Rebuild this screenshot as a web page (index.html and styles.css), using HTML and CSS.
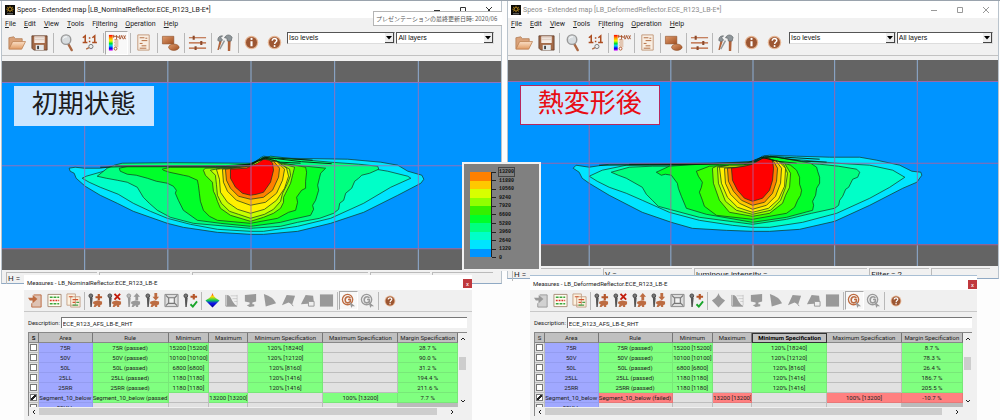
FILE: index.html
```html
<!DOCTYPE html>
<html lang="ja">
<head>
<meta charset="utf-8">
<title>Speos - Extended map</title>
<link rel="stylesheet" href="styles.css">
</head>
<body>
<svg class="sprite" aria-hidden="true">
  <linearGradient id="wood" x1="0" y1="0" x2="1" y2="1"><stop offset="0" stop-color="#df9b6c"/><stop offset="1" stop-color="#a04f22"/></linearGradient>
  <linearGradient id="pale" x1="0" y1="0" x2="0" y2="1"><stop offset="0" stop-color="#fbe0c8"/><stop offset="1" stop-color="#e09a62"/></linearGradient>
  <linearGradient id="spectrum" x1="0" y1="0" x2="0" y2="1"><stop offset="0" stop-color="#f00"/><stop offset=".2" stop-color="#f90"/><stop offset=".38" stop-color="#ef0"/><stop offset=".55" stop-color="#0d3"/><stop offset=".7" stop-color="#0cf"/><stop offset=".85" stop-color="#00e"/><stop offset="1" stop-color="#c0f"/></linearGradient>
  <linearGradient id="peak" x1="0" y1="0" x2="0" y2="1"><stop offset="0" stop-color="#e11"/><stop offset=".25" stop-color="#fd0"/><stop offset=".5" stop-color="#1c5"/><stop offset=".7" stop-color="#11e"/><stop offset="1" stop-color="#008"/></linearGradient>
  <symbol id="logo" viewBox="0 0 10 10"><path fill="#0c0b08" d="M0 0h10v10H0z"/><path d="M5 .8v6.4M2 2l6 4.4M8 2L2 6.4M1.2 4.2h7.6" stroke="#b98a1c" stroke-width=".8"/><circle cx="5" cy="4.2" r="1.8" fill="#16120a" stroke="#dda929" stroke-width=".6"/><path d="M2 8.8h6" stroke="#999" stroke-width=".8"/></symbol>
  <symbol id="folder" viewBox="0 0 20 20"><path d="M2 16.500V5l5-1 2 2h7v3" fill="#d9a27a" stroke="#b07a50" stroke-width=".8"/><path d="M2 17L6 9h13.500l-4 8z" fill="url(#pale)" stroke="#b97c4e" stroke-width=".8"/></symbol>
  <symbol id="save" viewBox="0 0 20 20"><path d="M2 3h16v15H4l-2-2z" fill="#a46a48" stroke="#5d3a28" stroke-width=".8"/><path d="M4.500 3.500h11v7h-11z" fill="#f5ebe4"/><path d="M5 5h10M5 7h10" stroke="#c9b3a4" stroke-width=".6"/><path d="M6 12.500h8.500V18H6z" fill="#e5e8ea"/><path d="M7.500 13.500h2V17h-2z" fill="#444"/></symbol>
  <symbol id="lens" viewBox="0 0 20 20"><path d="M11.500 11l4 7" stroke="#aa6844" stroke-width="2.500" stroke-linecap="round"/><circle cx="9.500" cy="7" r="5" fill="#d7dcdf" stroke="#999" stroke-width="1.500"/><path d="M6.500 6q1-2.500 4-2" fill="none" stroke="#fff"/></symbol>
  <symbol id="ratio" viewBox="0 0 20 20"><path d="M3 5l2.500-2v7M2.800 10h5M13 5l2.500-2v7M12.800 10h5" fill="none" stroke="#ad4d20" stroke-width="1.600"/><path d="M9.300 4.500h1.600v1.600H9.300zM9.300 8.200h1.600v1.600H9.300z" fill="#ad4d20"/><circle cx="11.500" cy="14.200" r="2.200" fill="#eee" stroke="#777"/><path d="M9.500 15.500L6.500 17" stroke="#b06a42" stroke-width="1.500"/></symbol>
  <symbol id="levels" viewBox="0 0 20 20"><path fill="url(#spectrum)" d="M2 2h4v16.500H2z"/><path d="M6.500 3.500h4M7 2v3M8 7h3M8 10h3M8 13h3" stroke="#b0562a"/><path d="M10 6.500V2.500l1.700 2.500 1.700-2.500v4M14 6.500l1.500-4 1.500 4M17.500 2.500l2 4M19.500 2.500l-2 4" stroke="#a44c24" fill="none" stroke-width=".9"/><path fill="#e2c6b2" d="M8 7h4v8H8z"/><circle cx="9" cy="16.500" r="1.500" fill="#fff" stroke="#b0562a"/></symbol>
  <symbol id="report" viewBox="0 0 20 20"><path d="M4 2h12v16H4z" fill="#f9eee2" stroke="#c29a7c"/><path d="M6 5h5M8 8h6M6 11h3M8 13.500h5M6 16h7M12 5.500h2" stroke="#b26b3f" stroke-width="1"/></symbol>
  <symbol id="shapes" viewBox="0 0 20 20"><path d="M1.500 3.500h12v8h-12z" fill="url(#wood)" stroke="#8b4a22" stroke-width=".6"/><ellipse cx="13.500" cy="15" rx="5.500" ry="3.300" fill="url(#wood)" stroke="#8b4a22" stroke-width=".6"/></symbol>
  <symbol id="sliders" viewBox="0 0 20 20"><path d="M1 5h18M1 10.500h18M1 16h18" stroke="#b75c31" stroke-width="1.300"/><path d="M6 3v4M14 8.500v4M8 14v4" stroke="#8e4a2a" stroke-width="2.200"/></symbol>
  <symbol id="tools" viewBox="0 0 20 20"><path d="M5 7l2 2-3 9H2.500zM13.500 8h3l-.5 11h-2.500z" fill="#b0623a"/><path d="M3 8c0-4 2-5 5-5L6 5l2 2.500L5.500 9zM10 5c2-4 6-3.500 8-.5l-1 4h-4l-.5-3z" fill="#8e9599" stroke="#5d6366" stroke-width=".7"/><path d="M10 8l-5 9" stroke="#909699" stroke-width="1.500"/></symbol>
  <symbol id="info" viewBox="0 0 20 20"><circle cx="10" cy="10" r="9" fill="#e5b594"/><circle cx="10" cy="10" r="7.400" fill="#9c5632"/><path d="M10 8.300v6.700" stroke="#fff" stroke-width="2.800" fill="none"/><circle cx="10" cy="5.200" r="1.500" fill="#fff"/></symbol>
  <symbol id="help" viewBox="0 0 20 20"><circle cx="10" cy="10" r="9" fill="#e5b594"/><circle cx="10" cy="10" r="7.400" fill="#9c5632"/><path d="M7 7.500c0-4 6.500-3.500 6 0-.3 2-2.800 1.800-2.800 4.500" stroke="#fff" stroke-width="2" fill="none"/><circle cx="10.100" cy="14.600" r="1.300" fill="#fff"/></symbol>
  <symbol id="arrow" viewBox="0 0 6 4"><path d="M0 0h6L3 3.500z"/></symbol>
  <symbol id="import" viewBox="0 0 16 16"><path d="M6 2h8v13H4v-4" fill="currentColor" fill-opacity=".35" stroke="currentColor"/><path d="M0 5h5V2l5 4.500L5 11V8H2z" fill="currentColor"/></symbol>
  <symbol id="list" viewBox="0 0 16 16"><path d="M1 1.500h14v13H1z" fill="#fffdf0" stroke="#a98c78"/><path d="M3 4.500h10M3 11.500h10" stroke="#3aa63e" stroke-width="1.500" stroke-dasharray="3 1"/><path d="M3 8h10" stroke="#d9352a" stroke-width="1.500" stroke-dasharray="2 1"/></symbol>
  <symbol id="copies" viewBox="0 0 16 16"><path d="M1 1h9v12H1zM5 4h10v11H5z" fill="#fdf2e0" stroke="#c4a28a"/><path d="M3 4h4M7 7h6M7 10h3" stroke="#d3542f" stroke-width="1.300"/><path d="M11 10h3M7 13h6" stroke="#48a04a" stroke-width="1.300"/></symbol>
  <symbol id="gauge" viewBox="0 0 16 16"><circle cx="3" cy="3" r="2" fill="#777" stroke="#444"/><path d="M2 5h3L4 15H2.500z" fill="#555"/></symbol>
  <symbol id="hand" viewBox="0 0 16 16"><path d="M6 9l4-1 5 1v3l-2 1v2h-2l-1-2-2 2H6l1-3-2-1z" fill="currentColor"/></symbol>
  <symbol id="plus" viewBox="0 0 16 16"><use href="#gauge"/><use href="#hand"/><path d="M8 4.500h7M11.500 1v7" stroke="#b5562a" stroke-width="2.300"/></symbol>
  <symbol id="drop" viewBox="0 0 16 16"><use href="#gauge"/><use href="#hand"/><path d="M8 1l6 6M14 1L8 7" stroke="#c21b0a" stroke-width="2"/></symbol>
  <symbol id="raise" viewBox="0 0 16 16"><use href="#gauge"/><use href="#hand"/><path d="M11.500 0L15 4h-2v4h-3V4H8z" fill="currentColor"/></symbol>
  <symbol id="raise-off" viewBox="0 0 16 16"><circle cx="3" cy="3" r="2" fill="#bbb" stroke="#999"/><path d="M2 5h3L4 15H2.500z" fill="#999"/><use href="#hand"/><path d="M11.500 0L15 4h-2v4h-3V4H8z" fill="currentColor"/></symbol>
  <symbol id="lower" viewBox="0 0 16 16"><use href="#gauge"/><use href="#hand"/><path d="M11.500 8L15 4h-2V0h-3v4H8z" fill="currentColor"/></symbol>
  <symbol id="fit" viewBox="0 0 16 16"><path d="M1 1.500h14v13H1z" fill="#ddd" stroke="#888"/><path d="M5 5h6v6H5zM2 2.500l3 3M14 2.500l-3 3M2 13.500l3-3M14 13.500l-3-3" fill="#f2f2f2" stroke="#777" stroke-width="1.200"/></symbol>
  <symbol id="verify" viewBox="0 0 16 16"><use href="#gauge"/><path d="M8 4h7M11.500 1v6" stroke="#b5562a" stroke-width="2.300"/><path d="M8 12l2.500 2.500L15 9" fill="none" stroke="#19a52a" stroke-width="2"/></symbol>
  <symbol id="cone" viewBox="0 0 16 16"><path d="M8 0c1 4 3 5 7.500 8L8 15.500.5 8C5 5 7 4 8 0z" fill="url(#peak)"/></symbol>
  <symbol id="diamond" viewBox="0 0 16 16"><path d="M8 0c1 4 3 5 7 8l-7 7.500L1 8c4-3 6-4 7-8z" fill="currentColor"/></symbol>
  <symbol id="curve" viewBox="0 0 16 16"><path d="M2 2v12h12" fill="none" stroke="currentColor"/><path d="M3 2c5 0 4 7 11 12H3z" fill="currentColor"/><path d="M7 3h7M9 6h5M11 9h3M14 2v11" stroke="currentColor" stroke-width=".4"/></symbol>
  <symbol id="screen" viewBox="0 0 16 16"><path d="M2 2l12-1v8l-4 1v2h2v2l-5 1-3-2 3-1V10L2 9z" fill="currentColor"/></symbol>
  <symbol id="wedge" viewBox="0 0 16 16"><path d="M2 1q10 3 13 10L4 14.500z" fill="currentColor"/></symbol>
  <symbol id="fan" viewBox="0 0 16 16"><path d="M6 2l9 1-3 9-4-2-7 3z" fill="currentColor"/><path d="M9 9l4 5" stroke="currentColor"/></symbol>
  <symbol id="fanbox" viewBox="0 0 16 16"><path d="M1 12L6 2l8 1 1 8z" fill="currentColor"/><path d="M9 9h6v5H9z" fill="#eee" stroke="currentColor"/></symbol>
  <symbol id="square" viewBox="0 0 16 16"><path d="M1 1.500h14v13H1z" fill="currentColor"/></symbol>
  <symbol id="spiral" viewBox="0 0 16 16"><circle cx="7" cy="7" r="5.500" fill="none" stroke="currentColor" stroke-width="1.400"/><path d="M10 5.500C8 2.500 4 4.500 4.500 8S8.500 11 10 9V7H7.500" fill="none" stroke="currentColor" stroke-width="1.700"/><path d="M9 9l6 5h-3l-1 2z" fill="#999"/></symbol>
</svg>

<main class="desktop">
  <section class="side nominal">
    <article class="map-window">
      <header class="titlebar">
        <svg class="logo"><use href="#logo"/></svg>
        <h1>Speos - Extended map [LB_NominalReflector.ECE_R123_LB-E*]</h1>
        <div class="controls">
          <button aria-label="最小化"><svg viewBox="0 0 8 8"><path d="M1 4.500h6"/></svg></button>
          <button aria-label="最大化"><svg viewBox="0 0 8 8"><path d="M1.500 1.500h5v5h-5z"/></svg></button>
          <button aria-label="閉じる"><svg viewBox="0 0 8 8"><path d="M1 1l6 6M7 1L1 7"/></svg></button>
        </div>
      </header>
      <nav class="menu"><button><u>F</u>ile</button><button><u>E</u>dit</button><button><u>V</u>iew</button><button><u>T</u>ools</button><button>F<u>i</u>ltering</button><button><u>O</u>peration</button><button><u>H</u>elp</button></nav>
      <div class="tools">
        <button aria-label="Open"><svg><use href="#folder"/></svg></button><button aria-label="Save"><svg><use href="#save"/></svg></button><i class="sep"></i>
        <button aria-label="Zoom"><svg><use href="#lens"/></svg></button><button aria-label="Actual size"><svg><use href="#ratio"/></svg></button><i class="sep"></i>
        <button class="pressed" aria-label="Levels"><svg><use href="#levels"/></svg></button><i class="sep"></i>
        <button aria-label="Report"><svg><use href="#report"/></svg></button><i class="sep"></i>
        <button aria-label="Shapes"><svg><use href="#shapes"/></svg></button><i class="sep"></i>
        <button aria-label="Adjust"><svg><use href="#sliders"/></svg></button><i class="sep"></i>
        <button aria-label="Preferences"><svg><use href="#tools"/></svg></button><i class="sep"></i>
        <button aria-label="Information"><svg class="round"><use href="#info"/></svg></button><button aria-label="Help"><svg class="round"><use href="#help"/></svg></button>
        <div class="pick wide"><select aria-label="Display"><option>Iso levels</option></select><span><svg><use href="#arrow"/></svg></span></div>
        <div class="pick"><select aria-label="Layer"><option>All layers</option></select><span><svg><use href="#arrow"/></svg></span></div>
      </div>
      <div class="canvas">
        <svg class="plot" viewBox="2 61 498 209">
          <path fill="#646464" d="M2 61h498v209H2z"/><path fill="#0094ff" d="M2 82h498v166H2z"/>
          <g class="contours">
            <path fill="#00e4ff" d="M69 168l1 3 4 2 2 5 9 8 15 9 17 8 16 8 34 12 16 4 34 5 33 2 13 0 34-3 33-8 33-11 34-17 23-12 3-4-2-4-14-4-10-6-17-3-33-3-67-1-17-2-6 4-7 4-20 2-80-.5-35 .5-15 2-16 0-9-1z"/>
            <path fill="#00ffc8" d="M82 178l7 4 11 5 18 7 15 9 17 8 17 7 23 6 27 5 33 2 13 0 34-5 33-8 33-15 27-16 20-9-3-2-20-5-24-4-33-4-33-2-36-4-11 8-20 2-80 0-33 .5-17 4.500-14 4z"/>
            <path fill="#00ff80" d="M97 176l9 2 11 2 10 2 10 5 6 10 6 6 8 7 13 7 23 6 57 5 30-2 17-4 22-4 14-5 5-4 1-6 4-3 2-7 6-5 3-7 4-3 3-3 8-2 9-4-1-3-19-2-28-2-33-3-27-3-20 7-78-.5-50 .5-8 2-7 3z"/>
            <path fill="#00ff2a" d="M120 171l7 3 9 1 11 3 9 3 11 2 6 3 3 4-1 3 3 7 5 10 14 10 23 3 30 3 30-4 12-3 18-4 3-6-1-4 3-5 3-10-1-5 2-8 1-4 5-5-30-3-34-4-13 3-20 2-100 0-9 2z"/>
            <path fill="#34ff00" d="M163 170l6 2 14 3 5 1 9 4 1 5 1 8 1 8 3 9 6 6 8 4 33 3 27-5 11-6 7-2 2-8-1-5 5-7 4-2 0-7 1-9-1-5-34-6-17 3-24 3-60 0-8 2z"/>
            <path fill="#90ff00" d="M203 170l2 5 7 7 1 9 2 4 2 6 3 7 10 7 20 6 13-4 10-4 7-5 3-6 0-5 2-4 5-10 2-8 2-8-29-8-20 8-40 1z"/>
            <path fill="#c8ff00" d="M210 170l5 5 1 9 1 11 4 8 8 8 9 3 12 4 14-4 9-5 7-8 2-8 5-10 3-8-1-6-16-9-15 0-8 6-30 2z"/>
            <path fill="#fff000" d="M216 169l3 10 1 13 7 10 10 7 13 4 14-4 12-9 8-12 4-12-2-8-11-8-25 6z"/>
            <path fill="#ffc800" d="M222 169l1 13 4 9 9 9 14 5 15-3 11-9 6-13 2-11-8-8-26 5z"/>
            <path fill="#ff8000" d="M225 169l1 11 4 8 8 8 12 3 13-2 9-7 6-13 1-9-6-7-23 5z"/>
            <path fill="red" d="M230 169l0 9 5 9 7 6 8 2 6-1 7-2 7-10 3-12-1-7-3-3-6-1-6 4-7 3-4 2z"/>
          </g>
          <path class="crest" d="M100 167l20-.5H215l20-.5 15-1.500 8-4 6-3.500 12 1.500 25 3 30 2M115 165.500h110l25-1.500 12-6h15l35 2M245 166l10-4 10-4 15 4 20 1"/>
          <path class="axes" d="M84.500 82v166M167.500 82v166M250.500 82v166M334 82v166M417.500 82v166M2 82.500h498M2 165.500h498M2 248.500h498"/>
          <path class="ticks" d="M84.500 61v21M167.500 61v21M250.500 61v21M334 61v21M417.500 61v21M84.500 249v21M167.500 249v21M250.500 249v21M334 249v21M417.500 249v21"/>
        </svg>
        <p class="caption">初期状態</p>
      </div>
      <footer class="status"><span>H =</span><span></span><span></span><span></span><span></span></footer>
    </article>

    <article class="measures">
      <header class="measure-title"><h2>Measures - LB_NominalReflector.ECE_R123_LB-E</h2><button aria-label="閉じる">x</button></header>
      <div class="measure-tools">
        <button aria-label="Import"><svg><use href="#import"/></svg></button><button aria-label="List"><svg><use href="#list"/></svg></button><button aria-label="Copy"><svg><use href="#copies"/></svg></button><i class="sep"></i>
        <button aria-label="Add"><svg><use href="#plus"/></svg></button><button aria-label="Delete"><svg><use href="#drop"/></svg></button><button class="off" aria-label="Move up"><svg><use href="#raise-off"/></svg></button><button aria-label="Move down"><svg><use href="#lower"/></svg></button><button aria-label="Fit"><svg><use href="#fit"/></svg></button><button aria-label="Verify"><svg><use href="#verify"/></svg></button><i class="sep"></i>
        <button aria-label="3D"><svg><use href="#cone"/></svg></button><button class="off" aria-label="Curve"><svg><use href="#curve"/></svg></button><button class="off" aria-label="Screen"><svg><use href="#screen"/></svg></button><button class="off" aria-label="Wedge"><svg><use href="#wedge"/></svg></button><button class="off" aria-label="Fan"><svg><use href="#fan"/></svg></button><button class="off" aria-label="Fan box"><svg><use href="#fanbox"/></svg></button><button class="off" aria-label="Area"><svg><use href="#square"/></svg></button><i class="sep"></i>
        <button class="pressed" aria-label="Refresh"><svg><use href="#spiral"/></svg></button><button class="off" aria-label="Refresh all"><svg><use href="#spiral"/></svg></button><i class="sep"></i>
        <button aria-label="Help"><svg class="round"><use href="#help"/></svg></button>
      </div>
      <div class="measure-body">
        <div class="field"><label for="desc-a">Description:</label><input id="desc-a" type="text" value="ECE_R123_AFS_LB-E_RHT"></div>
        <div class="sheet">
          <div class="rows">
            <table>
              <colgroup><col class="c-s"><col class="c-area"><col class="c-rule"><col class="c-min"><col class="c-max"><col class="c-spec"><col class="c-spec"><col class="c-margin"></colgroup>
              <thead><tr><th><b>S</b></th><th>Area</th><th>Rule</th><th>Minimum</th><th>Maximum</th><th>Minimum Specification</th><th>Maximum Specification</th><th>Margin Specification</th></tr></thead>
              <tbody>
                <tr><td><input type="checkbox" aria-label="75R"></td><td class="area">75R</td><td class="ok">75R (passed)</td><td class="ok">15200 [15200]</td><td></td><td class="ok">120% [18240]</td><td></td><td class="ok">28.7 %</td></tr>
                <tr><td><input type="checkbox" aria-label="50V"></td><td class="area">50V</td><td class="ok">50V (passed)</td><td class="ok">10100 [10100]</td><td></td><td class="ok">120% [12120]</td><td></td><td class="ok">90.0 %</td></tr>
                <tr><td><input type="checkbox" aria-label="50L"></td><td class="area">50L</td><td class="ok">50L (passed)</td><td class="ok">6800 [6800]</td><td></td><td class="ok">120% [8160]</td><td></td><td class="ok">31.2 %</td></tr>
                <tr><td><input type="checkbox" aria-label="25LL"></td><td class="area">25LL</td><td class="ok">25LL (passed)</td><td class="ok">1180 [1180]</td><td></td><td class="ok">120% [1416]</td><td></td><td class="ok">194.4 %</td></tr>
                <tr><td><input type="checkbox" aria-label="25RR"></td><td class="area">25RR</td><td class="ok">25RR (passed)</td><td class="ok">1180 [1180]</td><td></td><td class="ok">120% [1416]</td><td></td><td class="ok">211.6 %</td></tr>
                <tr><td><input type="checkbox" aria-label="Segment_10_below" checked></td><td class="area">Segment_10_below</td><td class="ok">Segment_10_below (passed)</td><td></td><td class="ok">13200 [13200]</td><td></td><td class="ok">100% [13200]</td><td class="ok">7.7 %</td></tr>
                <tr><td><input type="checkbox" aria-label="50ULL"></td><td class="area">50ULL</td><td></td><td></td><td></td><td></td><td></td><td class="idle"></td></tr>
              </tbody>
            </table>
          </div>
          <div class="vscroll"><svg viewBox="0 0 6 4"><path d="M1 3l2-2 2 2"/></svg><i></i><svg viewBox="0 0 6 4"><path d="M1 1l2 2 2-2"/></svg></div>
          <div class="hscroll"><svg viewBox="0 0 4 6"><path d="M3 1L1 3l2 2"/></svg><i></i><svg viewBox="0 0 4 6"><path d="M1 1l2 2-2 2"/></svg></div>
        </div>
      </div>
    </article>
  </section>

  <section class="side deformed">
    <article class="map-window">
      <header class="titlebar">
        <svg class="logo"><use href="#logo"/></svg>
        <h1>Speos - Extended map [LB_DeformedReflector.ECE_R123_LB-E*]</h1>
        <div class="controls">
          <button aria-label="最小化"><svg viewBox="0 0 8 8"><path d="M1 4.500h6"/></svg></button>
          <button aria-label="最大化"><svg viewBox="0 0 8 8"><path d="M1.500 1.500h5v5h-5z"/></svg></button>
          <button aria-label="閉じる"><svg viewBox="0 0 8 8"><path d="M1 1l6 6M7 1L1 7"/></svg></button>
        </div>
      </header>
      <nav class="menu"><button><u>F</u>ile</button><button><u>E</u>dit</button><button><u>V</u>iew</button><button><u>T</u>ools</button><button>F<u>i</u>ltering</button><button><u>O</u>peration</button><button><u>H</u>elp</button></nav>
      <div class="tools">
        <button aria-label="Open"><svg><use href="#folder"/></svg></button><button aria-label="Save"><svg><use href="#save"/></svg></button><i class="sep"></i>
        <button aria-label="Zoom"><svg><use href="#lens"/></svg></button><button aria-label="Actual size"><svg><use href="#ratio"/></svg></button><i class="sep"></i>
        <button aria-label="Levels"><svg><use href="#levels"/></svg></button><i class="sep"></i>
        <button aria-label="Report"><svg><use href="#report"/></svg></button><i class="sep"></i>
        <button aria-label="Shapes"><svg><use href="#shapes"/></svg></button><i class="sep"></i>
        <button aria-label="Adjust"><svg><use href="#sliders"/></svg></button><i class="sep"></i>
        <button aria-label="Preferences"><svg><use href="#tools"/></svg></button><i class="sep"></i>
        <button aria-label="Information"><svg class="round"><use href="#info"/></svg></button><button aria-label="Help"><svg class="round"><use href="#help"/></svg></button>
        <div class="pick wide"><select aria-label="Display"><option>Iso levels</option></select><span><svg><use href="#arrow"/></svg></span></div>
        <div class="pick"><select aria-label="Layer"><option>All layers</option></select><span><svg><use href="#arrow"/></svg></span></div>
      </div>
      <div class="canvas">
        <svg class="plot" viewBox="509 60 489 206">
          <path fill="#646464" d="M509 60h489v206H509z"/><path fill="#0094ff" d="M509 81h489v163H509z"/>
          <g class="contours">
            <path fill="#00e4ff" d="M574 168l6 4 3 6 7 5 20 12 33 17 29 10 21 6 34 2 26 1 17 0 30-2 35-8 35-16 33-17 14-6 5-7-1-3-9-1-12-6-23-5-17-3-30 0-33-1-27-1-7 1-10 7-26 1-117 0-20 3-13-2z"/>
            <path fill="#00ffc8" d="M590 176l8 5 12 6 17 6 16 7 27 12 30 8 33 5 20 2 17 0 33-5 34-9 33-15 20-11 15-10-12-7-23-5-33-2-33-3-38-3-13 7-27 1-99 0-24 5z"/>
            <path fill="#00ff80" d="M612 172l7 3 8 3 16 9 4 7 6 6 6 6 11 3 30 8 53 7 34-5 25-6 23-5 4-3 1-5 3-4 3-7 3-2 4-8 5-2 2-5-3-3-18-3-19-2-50-4-20 6-97 0-23 1z"/>
            <path fill="#00ff2a" d="M657 172l5 3 4-1 6 1 6 8 1 5 3 8 5 12 20 6 46 8 34-5 26-7 1-5-1-4 3-6 1-7 3-5 0-6-2-6-1-4-6-4-40-7-14 5-56 3-31 2z"/>
            <path fill="#34ff00" d="M697 171l2 5 4 6-1 5-2 5 3 8 2 6 12 9 36 4 34-6 8-6 3-7 3-5 1-5-2-6 0-7-3-7-6-5-20-6-17 5-44 2z"/>
            <path fill="#90ff00" d="M713 168l1 15 6 17 10 12 23 4 17-3 13-10 3-8 4-8 1-14-6-10-18-5-14 7-36 1z"/>
            <path fill="#c8ff00" d="M718 167l1 16 7 18 11 9 16 4 18-4 10-10 5-13 2-14-4-9-15-5-16 6-23 0z"/>
            <path fill="#fff000" d="M720 167l2 16 6 14 10 10 15 5 16-4 10-9 6-13 1-18-8-8-25 7z"/>
            <path fill="#ffc800" d="M725 168l1 15 5 11 9 9 13 6 14-4 9-9 5-13 1-15-6-8-23 6z"/>
            <path fill="#ff8000" d="M728 168l1 13 5 10 8 9 11 5 12-3 8-9 4-12 1-13-4-7-21 5z"/>
            <path fill="red" d="M732 168l1 12 5 10 7 8 8 3 10-3 7-8 3-10 1-12-1-8-4-2-6 0-5 3-5 3-8 2z"/>
          </g>
          <path class="crest" d="M600 165l50-.5 70-.5 33-1 12-6 12 0 25 4 25 1M630 164l80-1 43-1 12-6 20 1 35 2M745 164l17-7 15 4 20 2"/>
          <path class="axes" d="M590 81v163M671.500 81v163M753.500 81v163M835 81v163M917.500 81v163M509 81.500h489M509 163h489M509 244.500h489"/>
          <path class="ticks" d="M590 60v21M671.500 60v21M753.500 60v21M835 60v21M917.500 60v21M590 245v21M671.500 245v21M753.500 245v21M835 245v21M917.500 245v21"/>
        </svg>
        <p class="caption">熱変形後</p>
      </div>
      <footer class="status"><span>H =</span><span>V =</span><span>luminous intensity =</span><span>Filter = 2</span><span></span></footer>
    </article>

    <article class="measures">
      <header class="measure-title"><h2>Measures - LB_DeformedReflector.ECE_R123_LB-E</h2><button aria-label="閉じる">x</button></header>
      <div class="measure-tools">
        <button class="off" aria-label="Import"><svg><use href="#import"/></svg></button><button aria-label="List"><svg><use href="#list"/></svg></button><button aria-label="Copy"><svg><use href="#copies"/></svg></button><i class="sep"></i>
        <button aria-label="Add"><svg><use href="#plus"/></svg></button><button aria-label="Delete"><svg><use href="#drop"/></svg></button><button aria-label="Move up"><svg><use href="#raise"/></svg></button><button aria-label="Move down"><svg><use href="#lower"/></svg></button><button aria-label="Fit"><svg><use href="#fit"/></svg></button><button aria-label="Verify"><svg><use href="#verify"/></svg></button><i class="sep"></i>
        <button class="off" aria-label="3D"><svg><use href="#diamond"/></svg></button><button class="off" aria-label="Curve"><svg><use href="#curve"/></svg></button><button class="off" aria-label="Screen"><svg><use href="#screen"/></svg></button><button class="off" aria-label="Wedge"><svg><use href="#wedge"/></svg></button><button class="off" aria-label="Fan"><svg><use href="#fan"/></svg></button><button class="off" aria-label="Fan box"><svg><use href="#fanbox"/></svg></button><button class="off" aria-label="Area"><svg><use href="#square"/></svg></button><i class="sep"></i>
        <button class="pressed" aria-label="Refresh"><svg><use href="#spiral"/></svg></button><button class="off" aria-label="Refresh all"><svg><use href="#spiral"/></svg></button><i class="sep"></i>
        <button aria-label="Help"><svg class="round"><use href="#help"/></svg></button>
      </div>
      <div class="measure-body">
        <div class="field"><label for="desc-b">Description:</label><input id="desc-b" type="text" value="ECE_R123_AFS_LB-E_RHT"></div>
        <div class="sheet">
          <div class="rows">
            <table>
              <colgroup><col class="c-s"><col class="c-area"><col class="c-rule"><col class="c-min"><col class="c-max"><col class="c-spec"><col class="c-spec"><col class="c-margin"></colgroup>
              <thead><tr><th>S</th><th>Area</th><th>Rule</th><th>Minimum</th><th>Maximum</th><th class="active">Minimum Specification</th><th>Maximum Specification</th><th>Margin Specification</th></tr></thead>
              <tbody>
                <tr><td><input type="checkbox" aria-label="75R"></td><td class="area">75R</td><td class="ok">75R (passed)</td><td class="ok">15200 [15200]</td><td></td><td class="ok">120% [18240]</td><td></td><td class="ok">8.7 %</td></tr>
                <tr><td><input type="checkbox" aria-label="50V"></td><td class="area">50V</td><td class="ok">50V (passed)</td><td class="ok">10100 [10100]</td><td></td><td class="ok">120% [12120]</td><td></td><td class="ok">78.3 %</td></tr>
                <tr><td><input type="checkbox" aria-label="50L"></td><td class="area">50L</td><td class="ok">50L (passed)</td><td class="ok">6800 [6800]</td><td></td><td class="ok">120% [8160]</td><td></td><td class="ok">26.4 %</td></tr>
                <tr><td><input type="checkbox" aria-label="25LL"></td><td class="area">25LL</td><td class="ok">25LL (passed)</td><td class="ok">1180 [1180]</td><td></td><td class="ok">120% [1416]</td><td></td><td class="ok">186.7 %</td></tr>
                <tr><td><input type="checkbox" aria-label="25RR"></td><td class="area">25RR</td><td class="ok">25RR (passed)</td><td class="ok">1180 [1180]</td><td></td><td class="ok">120% [1416]</td><td></td><td class="ok">205.5 %</td></tr>
                <tr><td><input type="checkbox" aria-label="Segment_10_below" checked></td><td class="area">Segment_10_below</td><td class="bad">Segment_10_below (failed)</td><td></td><td class="bad">13200 [13200]</td><td></td><td class="bad">100% [13200]</td><td class="bad">-10.7 %</td></tr>
                <tr><td><input type="checkbox" aria-label="50ULL"></td><td class="area">50ULL</td><td></td><td></td><td></td><td></td><td></td><td class="idle"></td></tr>
              </tbody>
            </table>
          </div>
          <div class="vscroll"><svg viewBox="0 0 6 4"><path d="M1 3l2-2 2 2"/></svg><i></i><svg viewBox="0 0 6 4"><path d="M1 1l2 2 2-2"/></svg></div>
          <div class="hscroll"><svg viewBox="0 0 4 6"><path d="M3 1L1 3l2 2"/></svg><i></i><svg viewBox="0 0 4 6"><path d="M1 1l2 2-2 2"/></svg></div>
        </div>
      </div>
    </article>
  </section>

  <div class="tooltip">プレゼンテーションの最終更新日時: 2020/06</div>

  <aside class="legend">
    <div class="bar"><i class="l10"></i><i class="l9"></i><i class="l8"></i><i class="l7"></i><i class="l6"></i><i class="l5"></i><i class="l4"></i><i class="l3"></i><i class="l2"></i><i class="l1"></i></div>
    <ol><li><b>13200</b></li><li>11880</li><li>10560</li><li>9240</li><li>7920</li><li>6600</li><li>5280</li><li>3960</li><li>2640</li><li>1320</li><li>0</li></ol>
  </aside>
</main>
</body>
</html>
```

FILE: styles.css
```css
* { box-sizing: border-box; }
body { margin: 0; background: #fdfdfd; color: #222; font: 7px/10px Roboto, "Noto Sans CJK JP", sans-serif; }
h1, h2, p, ol { margin: 0; padding: 0; font-weight: 400; }
button, input, select { margin: 0; padding: 0; border: 0; font: inherit; color: inherit; background: none; }
.sprite { position: absolute; width: 0; height: 0; }

.desktop { position: relative; display: grid; grid-template-columns: 503fr 497fr; min-height: 100vh; overflow: hidden; border-top: 1px solid #9aa3ad; }
.side { display: flex; flex-direction: column; min-width: 0; }
.nominal { padding-left: 1px; }
.deformed { padding: 0 1px 0 4px; }

.map-window { background: #f1f1f1; border: 1px solid #b9c3cc; border-top: 0; border-bottom-color: #8fa9c4; }
.nominal .map-window { margin-right: 1px; }
.titlebar { display: flex; align-items: center; gap: 2px; height: 17px; padding-left: 3px; background: #fff; }
.titlebar h1 { flex: 1; font-size: 7px; white-space: nowrap; }
.deformed h1 { color: #8b8b8b; }
.logo { width: 10px; height: 10px; }
.controls { display: flex; gap: 6px; padding-right: 2px; }
.controls button { width: 20px; height: 10px; display: grid; place-items: center; }
.controls svg { width: 8px; height: 8px; fill: none; stroke: #333; }
.deformed .controls svg { stroke: #999; }

.menu { display: flex; gap: 8px; height: 12px; padding-left: 3px; }
.menu button { line-height: 12px; }
.menu u { text-underline-offset: 1px; }
.tools { display: flex; align-items: center; height: 26px; margin-bottom: 5px; padding-left: 3px; border-bottom: 1px solid #c2c2c2; }
.deformed .tools { margin-bottom: 4px; padding-left: 4px; }
.tools button { flex: none; width: 23px; height: 24px; display: grid; place-items: center; }
.tools button svg { width: 19px; height: 19px; }
.tools button svg.round { width: 15px; height: 15px; }
.sep { flex: none; width: 1px; height: 20px; margin: 0 1px 0 2px; background: #b8b8b8; }
.deformed .tools .sep { margin: 0 1px; }
.pressed { background: #f8f8f8; border: 1px solid #a8a8a8; border-right-color: #fff; border-bottom-color: #fff; }
.pick { flex: 97; display: flex; height: 12px; margin: 0 7px 9px 1px; background: #fff; border: 1px solid #555; border-right-color: #ddd; border-bottom-color: #ddd; }
.pick.wide { flex: 108; margin-right: 0; }
.deformed .pick { margin-right: 5px; }
.deformed .pick.wide { margin: 0 0 9px 3px; }
.pick select { flex: 1; min-width: 0; padding-left: 1px; appearance: none; font: 7px/10px "Liberation Sans", sans-serif; color: #111; }
.pick span { width: 9px; display: grid; place-items: center; background: #eee; border-right: 1px solid #444; border-bottom: 1px solid #444; }
.pick span svg { width: 6px; height: 4px; }

.canvas { position: relative; }
.plot { display: block; width: 100%; }
.contours { stroke: #12351c; stroke-width: .7; stroke-linejoin: round; }
.crest { fill: none; stroke: #062008; stroke-width: .9; }
.axes { fill: none; stroke: #a46fb4; stroke-width: 1; opacity: .85; }
.deformed .axes { stroke: #b2609c; }
.ticks { fill: none; stroke: #8faed4; stroke-width: 1; }
.caption { position: absolute; top: 12%; left: 2.4%; width: 28%; padding-bottom: 9px; background: #cce6ff; border: 1px solid #cce6ff; color: #1c1c1c; font: 26px/29px "Noto Sans CJK JP", sans-serif; text-align: center; }
.deformed .caption { width: 28.6%; color: #e80c14; border-color: #b8285c; }

.status { display: grid; grid-template-columns: 90fr 90fr 175fr 60fr 60fr; gap: 2px; height: 13px; padding: 2px 8px 0 4px; font-size: 8px; line-height: 11px; }
.deformed .status { height: 12px; line-height: 12px; }
.status span { padding-left: 1px; border-top: 1px solid #bbb; border-left: 1px solid #bbb; white-space: nowrap; }

.measures { position: relative; flex: 1; display: flex; flex-direction: column; margin: -9px 31px 0 23px; background: #f0f0f0; font-size: 6px; }
.deformed .measures { margin: -4px 22px 0 23px; border-top: 1px solid #a9bfd4; }
.measure-title { display: flex; justify-content: space-between; height: 15px; padding-left: 3px; background: #fff; }
.deformed .measure-title { height: 14px; }
.measure-title h2 { font-size: 6px; line-height: 15px; }
.measure-title button { width: 9px; height: 9px; margin-top: 4px; background: #c0383d; color: #fff; line-height: 7px; }
.measure-tools { display: flex; align-items: center; height: 22px; padding-left: 2px; border-bottom: 1px solid #c8c8c8; }
.measure-tools button { flex: none; width: 19px; height: 19px; display: grid; place-items: center; color: #bd6c42; }
.measure-tools svg { width: 15px; height: 15px; }
.measure-tools svg.round { width: 12px; height: 12px; }
.measure-tools .off { color: #999; }
.measure-tools .sep { margin: 0 1px; height: 18px; }
.measure-body { padding: 5px 5px 4px 4px; }
.field { display: flex; align-items: center; height: 11px; margin-bottom: 4px; }
.field label { min-width: 29px; padding-right: 1px; white-space: nowrap; }
.field input { flex: 1; height: 11px; padding-left: 1px; background: #fff; border-top: 1px solid #777; border-left: 1px solid #777; }

.sheet { display: grid; grid-template-columns: 1fr 9px; border-top: 1px solid #888; border-left: 1px solid #888; }
.rows { max-height: 74px; overflow: hidden; }
table { width: 100%; table-layout: fixed; border-collapse: separate; border-spacing: 0; }
th, td { height: 10px; padding: 0; overflow: hidden; border-right: 1px solid #bdbdbd; border-bottom: 1px solid #bdbdbd; line-height: 9px; text-align: center; font-weight: 400; white-space: nowrap; }
th { background: #c0c0c0; border-right-color: #777; border-bottom-color: #888; }
th.active { font-weight: 700; color: #000; border: 1px solid #333; line-height: 8px; }
td { background: #e1e1e1; }
.area { background: #a0a8ff; border-color: #949cf0; }
.ok { background: #80ff80; border-color: #78e878; }
.bad { background: #ff8080; border-color: #e87878; }
.idle { background: #bbb; }
.c-s { width: 10px; }
.c-area { width: 12.500%; }
.c-rule { width: 17.700%; }
.c-min { width: 9.500%; }
.c-max { width: 9.100%; }
.c-spec { width: 17.500%; }
.deformed .c-rule { width: 17.300%; }
td input[type="checkbox"] { display: block; width: 7px; height: 7px; margin-left: 1px; appearance: none; background: #fff; border: 1px solid #777; }
td input[type="checkbox"]:checked { background: linear-gradient(135deg, #fff 35%, #222 35%, #222 65%, #fff 65%); }

.vscroll, .hscroll { display: flex; align-items: center; background: #f0f0f0; }
.vscroll { flex-direction: column; padding: 3px 0; }
.vscroll i { width: 7px; height: 13px; margin: 15px 0 auto; background: #cdcdcd; }
.hscroll { height: 9px; margin-right: 1px; padding: 0 2px; gap: 2px; }
.hscroll i { flex: 1; height: 7px; margin-right: 10px; background: #cdcdcd; }
.vscroll svg, .hscroll svg { width: 6px; height: 6px; fill: none; stroke: #222; }

.tooltip { position: absolute; top: 10px; right: 49.800%; width: 12.900%; height: 15px; padding-left: 2px; background: #fff; border: 1px solid #b5b5b5; border-right: 0; color: #555; font: 6px/13px "Noto Sans CJK JP", sans-serif; white-space: nowrap; }

.legend { position: absolute; top: 161px; left: 46.200%; width: 79px; display: flex; padding: 4px 6px 7px; background: #808080; border: 2px solid #f2f2f2; }
.bar { width: 22px; margin: 4px 0 5px; display: flex; flex-direction: column; border-right: 1px solid #222; }
.bar i { flex: 1; }
.l10 { background: #ff8000; }
.l9 { background: #ffc800; }
.l8 { background: #d8ff00; }
.l7 { background: #90ff00; }
.l6 { background: #34f000; }
.l5 { background: #00ff2a; }
.l4 { background: #00ff80; }
.l3 { background: #00ffc8; }
.l2 { background: #00e4ff; }
.l1 { background: #0094ff; }
.legend ol { list-style: none; height: 94px; display: flex; flex-direction: column; justify-content: space-between; font: 5px/8px "Liberation Mono", monospace; color: #111; }
.legend li { display: flex; align-items: center; gap: 3px; height: 8px; font-weight: 700; }
.legend li::before { content: ""; width: 4px; height: 1px; background: #222; }
.legend b { outline: 1px solid #444; }
```
